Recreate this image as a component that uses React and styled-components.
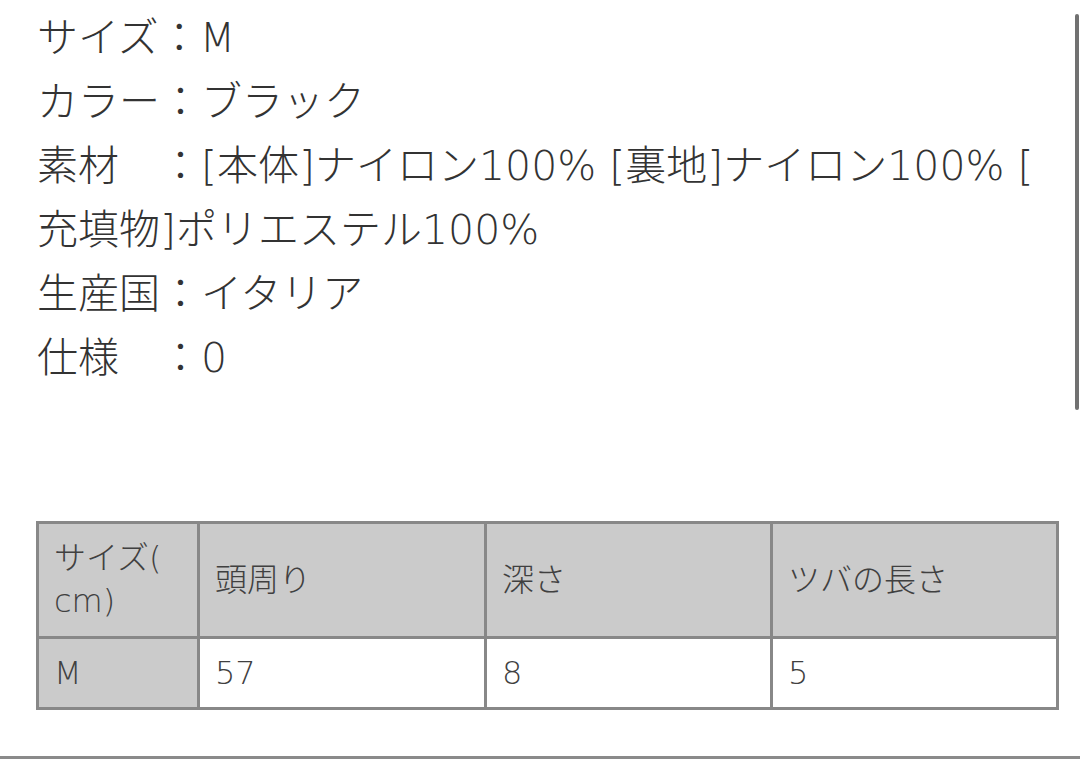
import React from 'react'
import styled, { createGlobalStyle } from 'styled-components'

const GlobalStyle = createGlobalStyle`
  html, body {
    margin: 0;
    padding: 0;
    background: #fff;
  }
  body {
    font-family: "DejaVu Sans", "Noto Sans CJK JP", sans-serif;
    font-weight: 300;
    color: #333;
  }
`

const Page = styled.div`
  position: relative;
  width: 1080px;
  height: 759px;
  box-sizing: border-box;
  padding: 6px 0 0 37px;
  border-bottom: 3px solid #8a8a8a;
  overflow: hidden;
`

// overlay scrollbar at the right edge
const ScrollThumb = styled.div`
  position: absolute;
  top: 14px;
  right: 1px;
  width: 4px;
  height: 396px;
  border-radius: 2px;
  background: #717171;
`

const Specs = styled.div`
  font-size: 41px;
  line-height: 64px;
  white-space: nowrap;
`

const SpecLine = styled.div``

const Table = styled.table`
  margin: 131px 0 0 -1px;
  width: 1020px;
  border-collapse: collapse;
  table-layout: fixed;
  border: 3px solid #888;
  font-size: 32px;
  line-height: 43px;
  color: #404040;
`

const Col = styled.col`
  width: ${p => p.$w}px;
`

const Cell = styled.td`
  border: 3px solid #888;
  padding: 0 15px;
  vertical-align: middle;
  background: ${p => (p.$shade ? '#cbcbcb' : '#fff')};
  height: ${p => (p.$head ? '115px' : '71px')};
  box-sizing: border-box;
  white-space: nowrap;
`

const specs = [
  ['サイズ：M'],
  ['カラー：ブラック'],
  ['素材　：[本体]ナイロン100% [裏地]ナイロン100% [', '充填物]ポリエステル100%'],
  ['生産国：イタリア'],
  ['仕様　：0'],
]

const cols = [161, 287, 286, 286]
const head = ['サイズ(cm)', '頭周り', '深さ', 'ツバの長さ']
const row = ['M', '57', '8', '5']

export default function App() {
  return (
    <Page>
      <GlobalStyle />
      <ScrollThumb />
      <Specs>
        {specs.map((lines, i) =>
          lines.map((t, j) => <SpecLine key={i + '-' + j}>{t}</SpecLine>)
        )}
      </Specs>
      <Table>
        <colgroup>
          {cols.map((w, i) => (
            <Col key={i} $w={w} />
          ))}
        </colgroup>
        <tbody>
          <tr>
            {head.map((h, i) => (
              <Cell key={h} $head $shade>
                {i === 0 ? (
                  <>
                    サイズ(
                    <br />
                    cm)
                  </>
                ) : (
                  h
                )}
              </Cell>
            ))}
          </tr>
          <tr>
            {row.map((v, i) => (
              <Cell key={i} $shade={i === 0}>
                {v}
              </Cell>
            ))}
          </tr>
        </tbody>
      </Table>
    </Page>
  )
}
